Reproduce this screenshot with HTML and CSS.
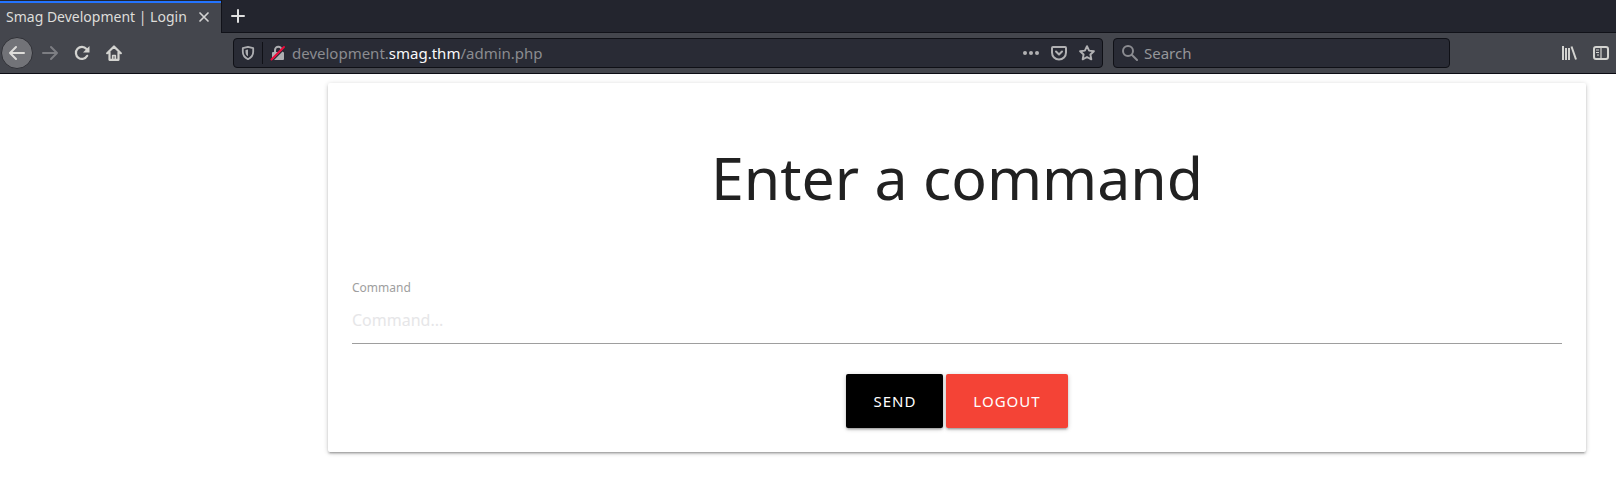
FILE: index.html
```html
<!DOCTYPE html>
<html lang="en">
<head>
<meta charset="utf-8">
<title>Smag Development | Login</title>
<link rel="stylesheet" href="styles.css">
</head>
<body>
<header class="browser">
  <div class="tabs">
    <div class="tab">
      <span class="tab-title">Smag Development | Login</span>
      <button class="plain tab-close" aria-label="Close tab"><svg width="12" height="12" viewBox="0 0 12 12"><path d="M2 2l8 8M10 2l-8 8" stroke="#d3d3d3" stroke-width="1.7" stroke-linecap="round"/></svg></button>
    </div>
    <button class="plain new-tab" aria-label="New tab"><svg width="16" height="16" viewBox="0 0 16 16"><path d="M8 2v12M2 8h12" stroke="#e0e0e0" stroke-width="2" stroke-linecap="round"/></svg></button>
  </div>
  <nav class="toolbar">
    <div class="nav-buttons">
      <button class="plain back" aria-label="Back"><svg width="18" height="16" viewBox="0 0 18 16" fill="none" stroke="#deddda" stroke-width="2" stroke-linecap="round" stroke-linejoin="round"><path d="M16 8H2M8 2L2 8l6 6"/></svg></button>
      <button class="plain nav-button" aria-label="Forward"><svg width="18" height="16" viewBox="0 0 18 16" fill="none" stroke="#7d7e83" stroke-width="2" stroke-linecap="round" stroke-linejoin="round"><path d="M2 8h14M10 2l6 6-6 6"/></svg></button>
      <button class="plain nav-button" aria-label="Reload"><svg width="16" height="16" viewBox="0 0 16 16"><path d="M13.2 10.8A6 6 0 1 1 12.5 4" fill="none" stroke="#d3d3d0" stroke-width="2.2" stroke-linecap="round"/><path d="M15.500 1v6.500H9z" fill="#d3d3d0"/></svg></button>
      <button class="plain nav-button" aria-label="Home"><svg width="16" height="16" viewBox="0 0 16 16" fill="none" stroke="#d3d3d0" stroke-width="2.200" stroke-linecap="round" stroke-linejoin="round"><path d="M1.200 8.200L8 1.500l6.800 6.700M3.500 7.500v7.300h9V7.500"/><path d="M6.700 14.500v-4h2.600v4" stroke-width="1.700"/></svg></button>
    </div>
    <div class="field address">
      <button class="plain shield" aria-label="Tracking protection"><svg width="14" height="16" viewBox="0 0 14 16"><path d="M7 1.800l5.200 1.400v3.600c0 3.800-2.200 6-5.200 7.400-3-1.400-5.200-3.600-5.200-7.400V3.200z" fill="none" stroke="#adaeb1" stroke-width="1.800" stroke-linejoin="round"/><path d="M7 4.500v6.800C5.200 10.200 4.500 9 4.500 6.800V5.100z" fill="#adaeb1"/></svg></button>
      <button class="plain lock" aria-label="Connection not secure"><svg width="16" height="16" viewBox="0 0 16 16"><path d="M5 8V5a3.300 3.300 0 0 1 6.600 0v3" fill="none" stroke="#adaeb1" stroke-width="2"/><rect x="2" y="7" width="12" height="8" rx="1" fill="#adaeb1"/><path d="M2.500 15.500L15 3" stroke="#292b35" stroke-width="1.500"/><path d="M1.500 14.500L14 2" stroke="#ee0a3a" stroke-width="2" stroke-linecap="round"/></svg></button>
      <a class="url" href="#">development.<span class="host">smag.thm</span>/admin.php</a>
      <button class="plain action" aria-label="Page actions"><svg width="16" height="16" viewBox="0 0 16 16" fill="#b1b1b3"><circle cx="2" cy="8" r="2"/><circle cx="8" cy="8" r="2"/><circle cx="14" cy="8" r="2"/></svg></button>
      <button class="plain action" aria-label="Save to Pocket"><svg width="16" height="16" viewBox="0 0 16 16" fill="none" stroke="#b1b1b3" stroke-width="2" stroke-linecap="round" stroke-linejoin="round"><path d="M2 2h12a1 1 0 0 1 1 1v4.500a7 7 0 0 1-14 0V3a1 1 0 0 1 1-1z"/><path d="M5 6.500l3 3 3-3"/></svg></button>
      <button class="plain action" aria-label="Bookmark"><svg width="16" height="16" viewBox="0 0 16 16"><path d="M8 1.200l2.100 4.400 4.800.6-3.500 3.300.9 4.800L8 12l-4.300 2.300.9-4.800L1.100 6.200l4.800-.6z" fill="none" stroke="#b1b1b3" stroke-width="1.900" stroke-linejoin="round"/></svg></button>
    </div>
    <label class="field search">
      <svg width="16" height="16" viewBox="0 0 16 16" fill="none" stroke="#8b8c91" stroke-width="2" stroke-linecap="round"><circle cx="6" cy="6" r="5"/><path d="M10 10l5 5"/></svg>
      <input class="search-input" type="text" placeholder="Search" aria-label="Search">
    </label>
    <div class="tools">
      <button class="plain" aria-label="Library"><svg width="16" height="16" viewBox="0 0 16 16" fill="none" stroke="#d3d3d0" stroke-width="2"><path d="M2 1v14M5 3v12M8 3v12M10.500 1.500L15 14.500"/></svg></button>
      <button class="plain" aria-label="Sidebars"><svg width="16" height="16" viewBox="0 0 16 16" fill="none" stroke="#d3d3d0"><rect x="1" y="2" width="14" height="12" rx="2" stroke-width="2"/><path d="M8 2v12M3 5h3M3 7.500h3M4 10h2" stroke-width="1.200"/></svg></button>
    </div>
  </nav>
</header>
<main class="page">
  <form class="card">
    <h1 class="title">Enter a command</h1>
    <label class="label" for="command">Command</label>
    <input class="command" id="command" type="text" placeholder="Command...">
    <div class="buttons">
      <button class="btn send" type="submit">SEND</button>
      <button class="btn logout" type="button">LOGOUT</button>
    </div>
  </form>
</main>
</body>
</html>
```
FILE: styles.css
```css
* { box-sizing: border-box; }
body {
  margin: 0;
  background: #fff;
  color: #212121;
  font-family: "Noto Sans", sans-serif;
}
button, input { font-family: inherit; }
svg { display: block; flex: none; }
.plain {
  display: flex;
  align-items: center;
  justify-content: center;
  padding: 0;
  border: 0;
  background: none;
}
.tabs {
  display: flex;
  height: 33px;
  background: #23252e;
}
.tab {
  display: flex;
  align-items: center;
  justify-content: space-between;
  width: 221px;
  margin-top: 1px;
  padding: 0 11px 2px 6px;
  border-top: 2px solid #2374ff;
  background: #44464d;
}
.tab-title {
  font-size: 14px;
  line-height: 20px;
  color: #deddda;
  white-space: nowrap;
}
.new-tab {
  flex: 1;
  justify-content: flex-start;
  padding-left: 8px;
  border-left: 1px solid #111219;
  border-bottom: 1px solid #111219;
}
.toolbar {
  display: flex;
  align-items: center;
  height: 41px;
  padding-right: 7px;
  border-bottom: 1px solid #0c0c14;
  background: #44464d;
}
.nav-buttons {
  display: flex;
  flex: none;
  align-items: center;
  width: 233px;
  padding-left: 1px;
}
.back {
  width: 32px;
  height: 32px;
  margin-right: 1px;
  border: 1px solid #303137;
  border-radius: 50%;
  background: #727378;
}
.nav-button { width: 32px; height: 32px; }
.field {
  display: flex;
  align-items: center;
  height: 30px;
  border: 1px solid #0f1016;
  border-radius: 4px;
  background: #292b35;
}
.address {
  flex: 1 1 870px;
  padding-right: 1px;
}
.shield {
  width: 29px;
  height: 22px;
  border-right: 1px solid #101117;
}
.lock { width: 29px; }
.url {
  flex: 1;
  font-size: 15px;
  line-height: 20px;
  color: #8b8c90;
  text-decoration: none;
}
.host { color: #f9f9fa; }
.action { width: 28px; }
.search {
  flex: 0 1 337px;
  gap: 6px;
  margin-left: 10px;
  padding-left: 8px;
}
.search-input {
  flex: 1;
  min-width: 0;
  padding: 0;
  border: 0;
  outline: 0;
  background: none;
  color: #f9f9fa;
  font-size: 15px;
}
.search-input::placeholder { color: #95969a; opacity: 1; }
.tools {
  display: flex;
  flex: none;
  justify-content: flex-end;
  gap: 16px;
  width: 159px;
}
.page { padding: 9px 30px 48px 328px; }
.card {
  padding: 52px 24px 24px;
  border-radius: 2px;
  background: #fff;
  box-shadow: 0 2px 2px 0 rgba(0, 0, 0, .14), 0 3px 1px -2px rgba(0, 0, 0, .12), 0 1px 5px 0 rgba(0, 0, 0, .2);
}
.title {
  margin: 0;
  font-size: 59px;
  font-weight: 400;
  line-height: 84px;
  text-align: center;
}
.label {
  display: block;
  margin-top: 61px;
  font-size: 12px;
  line-height: 16px;
  color: #9e9e9e;
}
.command {
  display: block;
  width: 100%;
  height: 48px;
  padding: 0;
  border: 0;
  border-bottom: 1px solid #9e9e9e;
  border-radius: 0;
  outline: 0;
  background: none;
  font-size: 16px;
}
.command::placeholder { color: #e6e6e8; opacity: 1; }
.buttons {
  display: flex;
  justify-content: center;
  gap: 3px;
  margin-top: 30px;
}
.btn {
  height: 54px;
  padding: 0 27px;
  border: 0;
  border-radius: 2px;
  color: #fff;
  font-size: 15px;
  letter-spacing: 1px;
  box-shadow: 0 2px 2px 0 rgba(0, 0, 0, .14), 0 3px 1px -2px rgba(0, 0, 0, .12), 0 1px 5px 0 rgba(0, 0, 0, .2);
}
.send { background: #000; }
.logout { background: #f44336; }
```
